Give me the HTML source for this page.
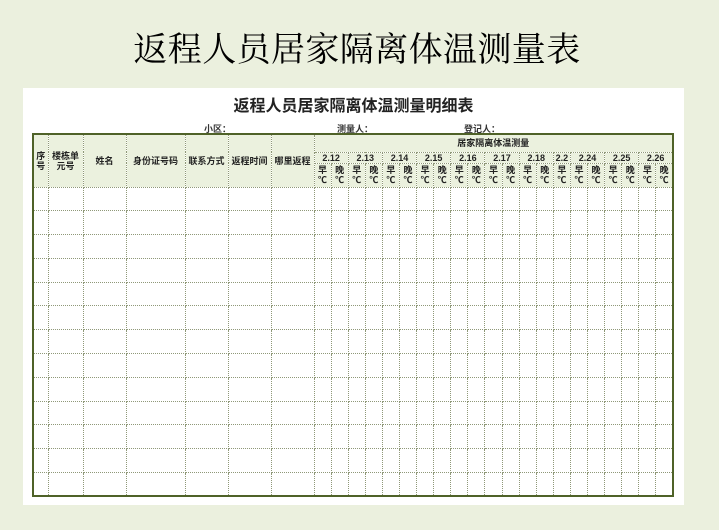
<!DOCTYPE html>
<html><head><meta charset="utf-8"><style>
body{margin:0;width:719px;height:530px;background:#ebf0de;position:relative;overflow:hidden;font-family:"Liberation Sans","Noto Sans CJK SC",sans-serif;}
.t1{position:absolute;left:0;width:714px;top:29px;text-align:center;font-family:"Liberation Serif","Noto Serif CJK SC",serif;font-size:34px;line-height:44px;color:#000;letter-spacing:0.4px}
.panel{position:absolute;left:23px;top:88px;width:661px;height:417px;background:#fff}
.t2{position:absolute;left:0;width:661px;top:9px;text-align:center;font-size:16px;line-height:20px;font-weight:bold;color:#222}
.lab{position:absolute;top:34px;font-size:9px;font-weight:bold;color:#333}
table{position:absolute;left:9px;top:45px;border-collapse:collapse;table-layout:fixed;border:2px solid #4f6228}
td{border:1px dotted #8f9878;padding:0;text-align:center;font-size:9px;line-height:10px;color:#222;overflow:hidden;white-space:nowrap}
thead td{background:#ebf1de;font-weight:bold}
tbody tr{height:23.8px}
.w{white-space:normal}
</style></head><body>
<div class="t1">返程人员居家隔离体温测量表</div>
<div class="panel">
<div class="t2">返程人员居家隔离体温测量明细表</div>
<div class="lab" style="left:181px">小区：</div>
<div class="lab" style="left:314px">测量人：</div>
<div class="lab" style="left:441px">登记人：</div>
<table>
<colgroup>
<col style="width:15px"><col style="width:35px"><col style="width:43px"><col style="width:59px"><col style="width:43px"><col style="width:43px"><col style="width:43px">
<col span="21" style="width:17.1px">
</colgroup>
<thead>
<tr style="height:18px"><td rowspan="3" class="w">序号</td><td rowspan="3" class="w">楼栋单元号</td><td rowspan="3">姓名</td><td rowspan="3">身份证号码</td><td rowspan="3">联系方式</td><td rowspan="3">返程时间</td><td rowspan="3">哪里返程</td><td colspan="21">居家隔离体温测量</td></tr>
<tr style="height:8px"><td colspan="2">2.12</td><td colspan="2">2.13</td><td colspan="2">2.14</td><td colspan="2">2.15</td><td colspan="2">2.16</td><td colspan="2">2.17</td><td colspan="2">2.18</td><td>2.2</td><td colspan="2">2.24</td><td colspan="2">2.25</td><td colspan="2">2.26</td></tr>
<tr style="height:24px">
<td class="w">早<br>℃</td><td class="w">晚<br>℃</td><td class="w">早<br>℃</td><td class="w">晚<br>℃</td><td class="w">早<br>℃</td><td class="w">晚<br>℃</td><td class="w">早<br>℃</td><td class="w">晚<br>℃</td><td class="w">早<br>℃</td><td class="w">晚<br>℃</td><td class="w">早<br>℃</td><td class="w">晚<br>℃</td><td class="w">早<br>℃</td><td class="w">晚<br>℃</td><td class="w">早<br>℃</td><td class="w">早<br>℃</td><td class="w">晚<br>℃</td><td class="w">早<br>℃</td><td class="w">晚<br>℃</td><td class="w">早<br>℃</td><td class="w">晚<br>℃</td></tr>
</thead>
<tbody>
<tr><td></td><td></td><td></td><td></td><td></td><td></td><td></td><td></td><td></td><td></td><td></td><td></td><td></td><td></td><td></td><td></td><td></td><td></td><td></td><td></td><td></td><td></td><td></td><td></td><td></td><td></td><td></td><td></td></tr>
<tr><td></td><td></td><td></td><td></td><td></td><td></td><td></td><td></td><td></td><td></td><td></td><td></td><td></td><td></td><td></td><td></td><td></td><td></td><td></td><td></td><td></td><td></td><td></td><td></td><td></td><td></td><td></td><td></td></tr>
<tr><td></td><td></td><td></td><td></td><td></td><td></td><td></td><td></td><td></td><td></td><td></td><td></td><td></td><td></td><td></td><td></td><td></td><td></td><td></td><td></td><td></td><td></td><td></td><td></td><td></td><td></td><td></td><td></td></tr>
<tr><td></td><td></td><td></td><td></td><td></td><td></td><td></td><td></td><td></td><td></td><td></td><td></td><td></td><td></td><td></td><td></td><td></td><td></td><td></td><td></td><td></td><td></td><td></td><td></td><td></td><td></td><td></td><td></td></tr>
<tr><td></td><td></td><td></td><td></td><td></td><td></td><td></td><td></td><td></td><td></td><td></td><td></td><td></td><td></td><td></td><td></td><td></td><td></td><td></td><td></td><td></td><td></td><td></td><td></td><td></td><td></td><td></td><td></td></tr>
<tr><td></td><td></td><td></td><td></td><td></td><td></td><td></td><td></td><td></td><td></td><td></td><td></td><td></td><td></td><td></td><td></td><td></td><td></td><td></td><td></td><td></td><td></td><td></td><td></td><td></td><td></td><td></td><td></td></tr>
<tr><td></td><td></td><td></td><td></td><td></td><td></td><td></td><td></td><td></td><td></td><td></td><td></td><td></td><td></td><td></td><td></td><td></td><td></td><td></td><td></td><td></td><td></td><td></td><td></td><td></td><td></td><td></td><td></td></tr>
<tr><td></td><td></td><td></td><td></td><td></td><td></td><td></td><td></td><td></td><td></td><td></td><td></td><td></td><td></td><td></td><td></td><td></td><td></td><td></td><td></td><td></td><td></td><td></td><td></td><td></td><td></td><td></td><td></td></tr>
<tr><td></td><td></td><td></td><td></td><td></td><td></td><td></td><td></td><td></td><td></td><td></td><td></td><td></td><td></td><td></td><td></td><td></td><td></td><td></td><td></td><td></td><td></td><td></td><td></td><td></td><td></td><td></td><td></td></tr>
<tr><td></td><td></td><td></td><td></td><td></td><td></td><td></td><td></td><td></td><td></td><td></td><td></td><td></td><td></td><td></td><td></td><td></td><td></td><td></td><td></td><td></td><td></td><td></td><td></td><td></td><td></td><td></td><td></td></tr>
<tr><td></td><td></td><td></td><td></td><td></td><td></td><td></td><td></td><td></td><td></td><td></td><td></td><td></td><td></td><td></td><td></td><td></td><td></td><td></td><td></td><td></td><td></td><td></td><td></td><td></td><td></td><td></td><td></td></tr>
<tr><td></td><td></td><td></td><td></td><td></td><td></td><td></td><td></td><td></td><td></td><td></td><td></td><td></td><td></td><td></td><td></td><td></td><td></td><td></td><td></td><td></td><td></td><td></td><td></td><td></td><td></td><td></td><td></td></tr>
<tr><td></td><td></td><td></td><td></td><td></td><td></td><td></td><td></td><td></td><td></td><td></td><td></td><td></td><td></td><td></td><td></td><td></td><td></td><td></td><td></td><td></td><td></td><td></td><td></td><td></td><td></td><td></td><td></td></tr>
</tbody>
</table>
</div>
</body></html>
